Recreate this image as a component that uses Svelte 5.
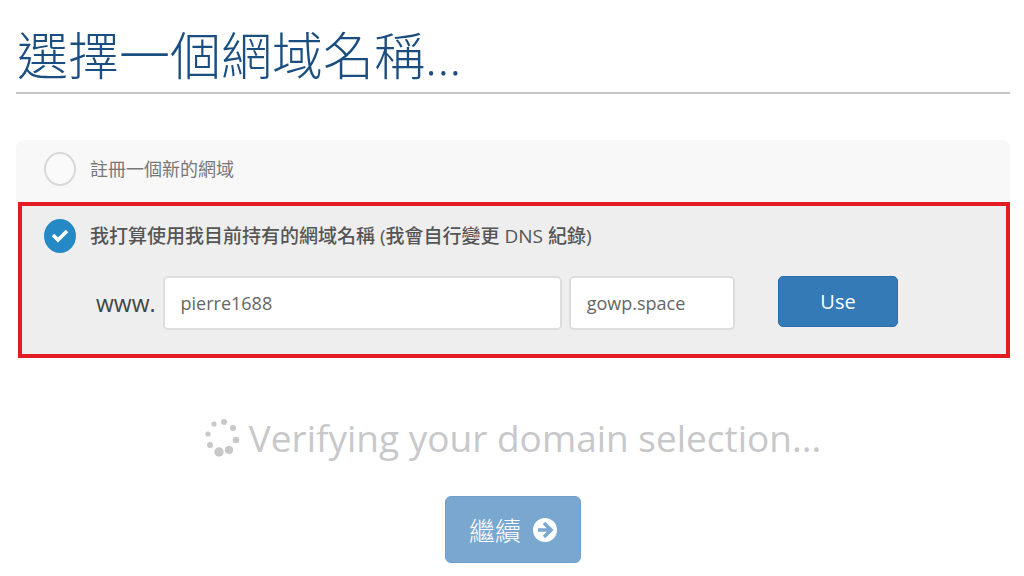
<script>
  let selected = $state('own');
  let sld = $state('pierre1688');
  let tld = $state('gowp.space');

  // 로딩 점: 위에서 시계 방향, 아래쪽으로 갈수록 커진다
  const dots = [
    { x: 19, y: 4, r: 3 },
    { x: 28, y: 10, r: 3 },
    { x: 31, y: 22, r: 3.3 },
    { x: 24, y: 32, r: 4.1 },
    { x: 14, y: 34, r: 4.7 },
    { x: 5, y: 27, r: 3 },
    { x: 3, y: 16, r: 2.6 },
    { x: 9, y: 6, r: 2.6 },
  ];

  function handleSubmit(e) {
    e.preventDefault();
  }
</script>

<main class="page">
  <h1>選擇一個網域名稱...</h1>

  <form class="options" onsubmit={handleSubmit}>
    <div class="option">
      <label class="option-label">
        <span class="radio">
          <input type="radio" name="domain" value="register" bind:group={selected} />
          <svg viewBox="0 0 32 34" aria-hidden="true"><path d="M9 16l5 5 9-9" /></svg>
        </span>
        <span>註冊一個新的網域</span>
      </label>
    </div>

    <div class="option active">
      <label class="option-label">
        <span class="radio">
          <input type="radio" name="domain" value="own" bind:group={selected} />
          <svg viewBox="0 0 32 34" aria-hidden="true"><path d="M9 16l5 5 9-9" /></svg>
        </span>
        <span>我打算使用我目前持有的網域名稱 (我會自行變更 DNS 紀錄)</span>
      </label>

      <div class="domain-row">
        <label class="prefix" for="sld">www.</label>
        <input id="sld" class="field" type="text" bind:value={sld} />
        <input class="field" type="text" aria-label="TLD" bind:value={tld} />
        <button class="btn-use" type="submit">Use</button>
      </div>
    </div>
  </form>

  <div class="loading" role="status">
    <svg class="spinner" viewBox="0 0 36 40" aria-hidden="true">
      {#each dots as dot}
        <circle cx={dot.x} cy={dot.y} r={dot.r} />
      {/each}
    </svg>
    <span>Verifying your domain selection...</span>
  </div>

  <button class="btn-continue" type="button" disabled>
    <span>繼續</span>
    <svg viewBox="0 0 24 24" aria-hidden="true">
      <circle cx="12" cy="12" r="12" />
      <path d="M5 12h12M11 5l7 7-7 7" />
    </svg>
  </button>
</main>

<style>
  :global(body) {
    margin: 0;
    background: #fff;
  }

  .page {
    display: flex;
    flex-direction: column;
    padding: 20px 14px 12px 16px;
    font-family: 'Open Sans', 'Noto Sans CJK TC', sans-serif;
    color: #555;
  }

  h1 {
    margin: 0 0 46px;
    padding: 0 0 2px 1px;
    border-bottom: 2px solid #c6c6c6;
    font-size: 51px;
    font-weight: 300;
    line-height: 70px;
    color: #1a4d80;
  }

  .option {
    padding: 12px 28px 16px;
    background: #f8f8f8;
    border-radius: 8px 8px 0 0;
  }

  .option.active {
    margin-left: 2px;
    padding: 13px 108px 24px 22px;
    background: #eee;
    border: 4px solid #e31b23;
    border-radius: 0;
  }

  .option-label {
    display: flex;
    align-items: center;
    gap: 14px;
    font-size: 18px;
    line-height: 28px;
    color: #777;
    cursor: pointer;
  }

  .active .option-label {
    font-size: 19px;
    font-weight: 500;
    color: #555;
  }

  .radio {
    position: relative;
    width: 32px;
    height: 34px;
  }

  .radio input {
    appearance: none;
    display: block;
    box-sizing: border-box;
    width: 100%;
    height: 100%;
    margin: 0;
    background: #fafafa;
    border: 2px solid #d8d8d8;
    border-radius: 50%;
  }

  .radio input:checked {
    background: #2489c5;
    border-color: #2489c5;
  }

  .radio svg {
    position: absolute;
    inset: 0;
    fill: none;
    stroke: #fff;
    stroke-width: 3.5;
    visibility: hidden;
    pointer-events: none;
  }

  .radio input:checked + svg {
    visibility: visible;
  }

  .domain-row {
    display: grid;
    grid-template-columns: auto minmax(0, 12fr) minmax(0, 5fr) 156px;
    align-items: start;
    column-gap: 7px;
    margin-top: 23px;
    padding-left: 52px;
  }

  .prefix {
    font-size: 23px;
    line-height: 54px;
    color: #444;
  }

  .field {
    box-sizing: border-box;
    width: 100%;
    height: 54px;
    padding: 0 16px;
    border: 2px solid #ddd;
    border-radius: 5px;
    background: #fff;
    font-family: inherit;
    font-size: 18px;
    color: #666;
  }

  .btn-use {
    height: 51px;
    margin-left: 36px;
    border: 1px solid #2b6da8;
    border-radius: 5px;
    background: #337ab7;
    font-family: inherit;
    font-size: 20px;
    color: #fff;
    cursor: pointer;
  }

  .loading {
    display: flex;
    align-items: center;
    justify-content: center;
    gap: 8px;
    margin-top: 53px;
    font-size: 37px;
    line-height: 54px;
    color: #c8c8ca;
  }

  .spinner {
    width: 36px;
    height: 40px;
    fill: #c8c8ca;
  }

  .btn-continue {
    display: flex;
    align-items: center;
    align-self: center;
    gap: 12px;
    height: 67px;
    margin-top: 31px;
    padding: 0 23px;
    border: 1px solid #6f9fcb;
    border-radius: 6px;
    background: #7aa7d0;
    font-family: inherit;
    font-size: 26px;
    font-weight: 300;
    color: #fff;
  }

  .btn-continue svg {
    width: 24px;
    height: 24px;
    fill: #fff;
  }

  .btn-continue path {
    fill: none;
    stroke: #7aa7d0;
    stroke-width: 3.5;
  }
</style>
